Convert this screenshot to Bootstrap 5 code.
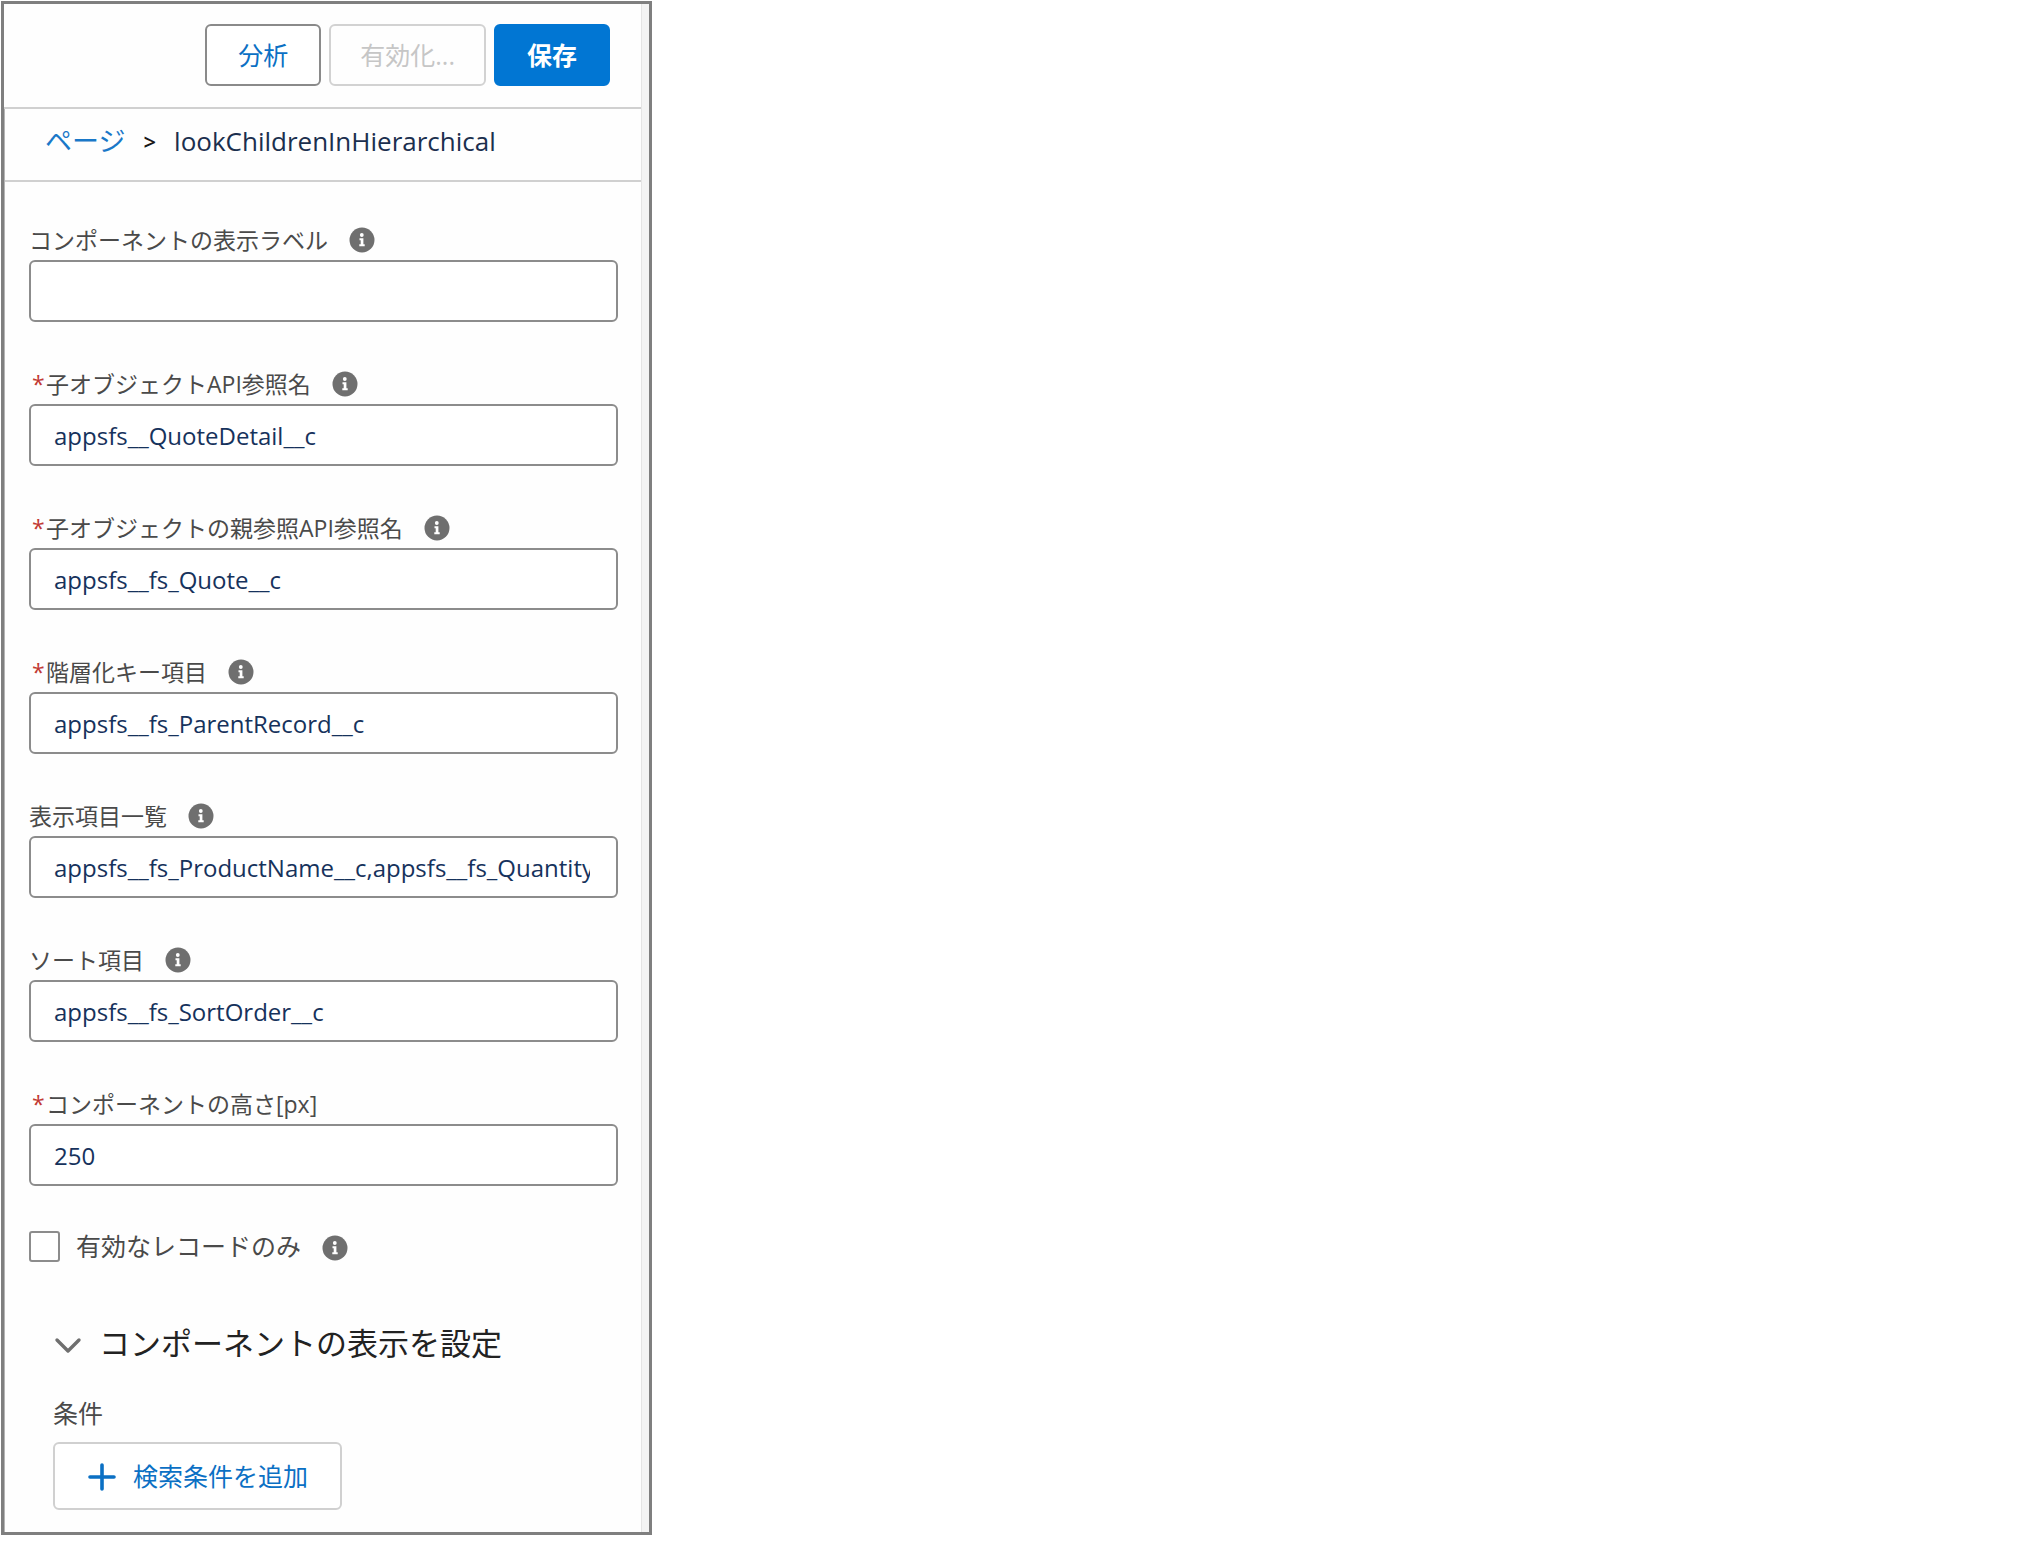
<!DOCTYPE html>
<html lang="ja">
<head>
<meta charset="utf-8">
<meta name="viewport" content="width=device-width, initial-scale=1">
<title>lookChildrenInHierarchical</title>
<link href="https://cdn.jsdelivr.net/npm/bootstrap@5.3.0/dist/css/bootstrap.min.css" rel="stylesheet">
<style>
  body { font-family: "Open Sans", "Noto Sans CJK JP", sans-serif; font-size: 25px; line-height: 32px; color: #4a4a4a; background: #fff; }
  .panel { max-width: 651px; margin: 1px; border: 3px solid #7f7f7f; background: #fefefe; }
  .panel-main { border-right: 1px solid #e4e4e4; }
  .panel-rail { width: 7px; background: #f3f3f3; }
  .panel-head { padding: 20px 31px 21px; border-bottom: 2px solid #d0d0d0; }
  .panel-sub { border-left: 1px solid #b5b5b5; }
  .btn { --bs-btn-font-size: 25px; --bs-btn-line-height: 32px; --bs-btn-padding-x: 31px; --bs-btn-padding-y: 13px; --bs-btn-border-width: 2px; --bs-btn-border-radius: 6px; --bs-btn-color: #0b70c4; --bs-btn-border-color: #8a8a8a; --bs-btn-bg: #fff; --bs-btn-disabled-color: #c6c6c6; --bs-btn-disabled-border-color: #d2d2d2; --bs-btn-disabled-opacity: 1; }
  .btn:disabled { --bs-btn-padding-x: 29px; }
  .btn-primary { --bs-btn-color: #fff; --bs-btn-bg: #0176d3; --bs-btn-border-color: #0176d3; }
  .btn-add { --bs-btn-border-color: #d0d0d0; --bs-btn-padding-y: 16px; --bs-btn-padding-x: 32px; }
  .crumbs { padding: 14px 40px 21px; line-height: 36px; border-bottom: 2px solid #d0d0d0; font-size: 26px; color: #1b2f4e; }
  .crumbs a { color: #1a78c8; font-size: 27px; }
  .crumb-sep { padding: 0 18px; color: #181818; font-size: 22px; font-weight: 600; }
  .panel-body { padding: 42px 23px 22px 24px; }
  .field-stack { gap: 46px; }
  .form-label { font-size: 23px; line-height: 32px; }
  .req { color: #c23934; width: 17px; padding-left: 3px; }
  .form-control { height: 62px; padding: 0 26px 0 23px; border: 2px solid #8c8c8c; border-radius: 6px; font-size: 24px; color: #16325c; background: #fff; }
  .info { width: 26px; height: 26px; margin-left: 21px; }
  .check-row { margin-top: 44px; }
  .form-check-input { width: 31px; height: 31px; border: 2px solid #8c8c8c; }
  .form-check-input[type=checkbox] { border-radius: 3px; }
  .section { padding: 61px 24px 0; }
  .section-title { font-size: 31px; line-height: 40px; color: #222; }
  .cond { margin: 34px 0 13px; }
</style>
</head>
<body>
<svg class="d-none" aria-hidden="true">
  <symbol id="info" viewBox="0 0 26 26">
    <circle cx="13" cy="13" r="12.5" fill="#6f6f6f"/>
    <circle cx="12.8" cy="8" r="1.900" fill="#fff"/>
    <path d="M10.500 11.300h3.900v6h1.300v1.900h-5.400v-1.900h1.400v-4h-1.200z" fill="#fff"/>
  </symbol>
</svg>
<main class="panel d-flex">
  <div class="panel-main flex-grow-1">
    <header class="panel-head d-flex justify-content-end gap-2">
      <button type="button" class="btn">分析</button>
      <button type="button" class="btn" disabled>有効化...</button>
      <button type="button" class="btn btn-primary fw-bold">保存</button>
    </header>
    <div class="panel-sub">
      <nav class="crumbs d-flex" aria-label="パス">
        <a href="#" class="text-decoration-none">ページ</a>
        <span class="crumb-sep">&gt;</span>
        <span>lookChildrenInHierarchical</span>
      </nav>
      <form class="panel-body">
        <div class="field-stack d-flex flex-column">
          <div>
            <div class="d-flex align-items-center mb-1"><label class="form-label m-0" for="f1">コンポーネントの表示ラベル</label><button type="button" class="info border-0 p-0 bg-transparent d-flex" aria-label="ヘルプ"><svg width="26" height="26"><use href="#info"/></svg></button></div>
            <input class="form-control" id="f1" type="text">
          </div>
          <div>
            <div class="d-flex align-items-center mb-1"><label class="form-label m-0 d-flex" for="f2"><span class="req">*</span>子オブジェクトAPI参照名</label><button type="button" class="info border-0 p-0 bg-transparent d-flex" aria-label="ヘルプ"><svg width="26" height="26"><use href="#info"/></svg></button></div>
            <input class="form-control" id="f2" type="text" value="appsfs__QuoteDetail__c">
          </div>
          <div>
            <div class="d-flex align-items-center mb-1"><label class="form-label m-0 d-flex" for="f3"><span class="req">*</span>子オブジェクトの親参照API参照名</label><button type="button" class="info border-0 p-0 bg-transparent d-flex" aria-label="ヘルプ"><svg width="26" height="26"><use href="#info"/></svg></button></div>
            <input class="form-control" id="f3" type="text" value="appsfs__fs_Quote__c">
          </div>
          <div>
            <div class="d-flex align-items-center mb-1"><label class="form-label m-0 d-flex" for="f4"><span class="req">*</span>階層化キー項目</label><button type="button" class="info border-0 p-0 bg-transparent d-flex" aria-label="ヘルプ"><svg width="26" height="26"><use href="#info"/></svg></button></div>
            <input class="form-control" id="f4" type="text" value="appsfs__fs_ParentRecord__c">
          </div>
          <div>
            <div class="d-flex align-items-center mb-1"><label class="form-label m-0" for="f5">表示項目一覧</label><button type="button" class="info border-0 p-0 bg-transparent d-flex" aria-label="ヘルプ"><svg width="26" height="26"><use href="#info"/></svg></button></div>
            <input class="form-control" id="f5" type="text" value="appsfs__fs_ProductName__c,appsfs__fs_Quantity__c">
          </div>
          <div>
            <div class="d-flex align-items-center mb-1"><label class="form-label m-0" for="f6">ソート項目</label><button type="button" class="info border-0 p-0 bg-transparent d-flex" aria-label="ヘルプ"><svg width="26" height="26"><use href="#info"/></svg></button></div>
            <input class="form-control" id="f6" type="text" value="appsfs__fs_SortOrder__c">
          </div>
          <div>
            <div class="d-flex align-items-center mb-1"><label class="form-label m-0 d-flex" for="f7"><span class="req">*</span>コンポーネントの高さ[px]</label></div>
            <input class="form-control" id="f7" type="text" value="250">
          </div>
        </div>
        <div class="check-row d-flex align-items-center">
          <input class="form-check-input m-0 me-3" id="f8" type="checkbox">
          <label for="f8">有効なレコードのみ</label>
          <button type="button" class="info border-0 p-0 bg-transparent d-flex mt-1" aria-label="ヘルプ"><svg width="26" height="26"><use href="#info"/></svg></button>
        </div>
        <section class="section">
          <h2 class="section-title d-flex align-items-center gap-3 m-0 fw-normal">
            <svg width="30" height="30" viewBox="0 0 30 30" fill="none" stroke="#6f6f6f" stroke-width="3.4" stroke-linecap="round" stroke-linejoin="round" aria-hidden="true"><path d="M4 12l11 11 11-11"/></svg>
            コンポーネントの表示を設定
          </h2>
          <p class="cond">条件</p>
          <button type="button" class="btn btn-add d-inline-flex align-items-center gap-3">
            <svg width="30" height="30" viewBox="0 0 30 30" fill="none" stroke="#0b70c4" stroke-width="3.6" stroke-linecap="round" aria-hidden="true"><path d="M15 4v24M3 16h24"/></svg>
            検索条件を追加
          </button>
        </section>
      </form>
    </div>
  </div>
  <div class="panel-rail flex-shrink-0"></div>
</main>
<script src="https://cdn.jsdelivr.net/npm/bootstrap@5.3.0/dist/js/bootstrap.bundle.min.js"></script>
</body>
</html>
